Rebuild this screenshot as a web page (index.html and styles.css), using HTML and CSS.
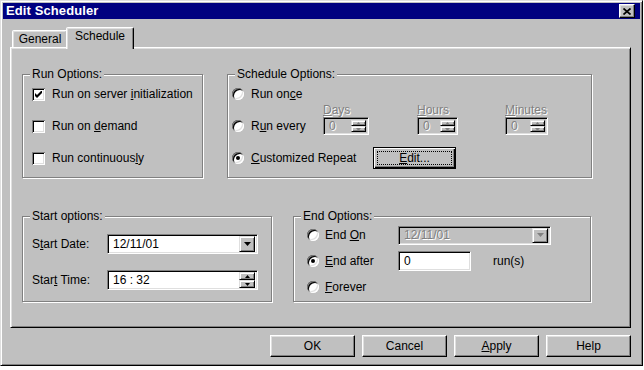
FILE: index.html
```html
<!DOCTYPE html>
<html>
<head>
<meta charset="utf-8">
<title>Edit Scheduler</title>
<link rel="stylesheet" href="styles.css">
</head>
<body>
<div class="window">
  <div class="titlebar">
    <span class="title">Edit Scheduler</span>
    <span class="close"><svg width="8" height="7" viewBox="0 0 8 7"><path d="M0.5 0.5 L7.5 6.5 M7.5 0.5 L0.5 6.5" stroke="#000" stroke-width="1.7" fill="none"/></svg></span>
  </div>
  <div class="main">
    <div class="tabs">
      <div class="tab">General</div>
      <div class="tab active">Schedule</div>
    </div>
    <div class="panel">
      <div class="row row-top">
        <div class="group g-run">
          <div class="legend">Run Options:</div>
          <div class="opts">
            <div class="opt"><span class="check"><svg width="7" height="7" viewBox="0 0 7 7"><polygon points="0,2 2,4 7,-1 7,2 2,7 0,5" fill="#000"/></svg></span><span>Run on server <u>i</u>nitialization</span></div>
            <div class="opt"><span class="check"></span><span>Run on <u>d</u>emand</span></div>
            <div class="opt"><span class="check"></span><span>Run continuous<u>l</u>y</span></div>
          </div>
        </div>
        <div class="group g-sched">
          <div class="legend">Schedule Options:</div>
          <div class="opts">
            <div class="opt"><span class="radio"></span><span>Run on<u>c</u>e</span></div>
            <div class="opt">
              <span class="radio"></span><span class="lbl-every">R<u>u</u>n every</span>
              <div class="spin-col days">
                <span class="spin-label dis"><u>D</u>ays</span>
                <div class="spin"><span class="val dis">0</span><span class="btns"><span class="sbtn"><svg width="5" height="3" viewBox="0 0 5 3"><polygon points="2.5,0 5,3 0,3" fill="#808080"/></svg></span><span class="sbtn"><svg width="5" height="3" viewBox="0 0 5 3"><polygon points="0,0 5,0 2.5,3" fill="#808080"/></svg></span></span></div>
              </div>
              <div class="spin-col hours">
                <span class="spin-label dis"><u>H</u>ours</span>
                <div class="spin"><span class="val dis">0</span><span class="btns"><span class="sbtn"><svg width="5" height="3" viewBox="0 0 5 3"><polygon points="2.5,0 5,3 0,3" fill="#808080"/></svg></span><span class="sbtn"><svg width="5" height="3" viewBox="0 0 5 3"><polygon points="0,0 5,0 2.5,3" fill="#808080"/></svg></span></span></div>
              </div>
              <div class="spin-col minutes">
                <span class="spin-label dis"><u>M</u>inutes</span>
                <div class="spin"><span class="val dis">0</span><span class="btns"><span class="sbtn"><svg width="5" height="3" viewBox="0 0 5 3"><polygon points="2.5,0 5,3 0,3" fill="#808080"/></svg></span><span class="sbtn"><svg width="5" height="3" viewBox="0 0 5 3"><polygon points="0,0 5,0 2.5,3" fill="#808080"/></svg></span></span></div>
              </div>
            </div>
            <div class="opt"><span class="radio on"></span><span class="lbl-custom"><u>C</u>ustomized Repeat</span>
              <span class="btn default"><span class="focus"><u>E</u>dit...</span></span>
            </div>
          </div>
        </div>
      </div>
      <div class="row row-bottom">
        <div class="group g-start">
          <div class="legend">Start options:</div>
          <div class="fields">
            <div class="frow"><span class="flabel">S<u>t</u>art Date:</span>
              <span class="combo"><span class="val">12/11/01</span><span class="dd"><svg width="7" height="4" viewBox="0 0 7 4"><polygon points="0,0 7,0 3.5,4" fill="#000"/></svg></span></span>
            </div>
            <div class="frow"><span class="flabel">Star<u>t</u> Time:</span>
              <span class="combo"><span class="val">16 : 32</span><span class="btns tall"><span class="sbtn"><svg width="5" height="3" viewBox="0 0 5 3"><polygon points="2.5,0 5,3 0,3" fill="#000"/></svg></span><span class="sbtn"><svg width="5" height="3" viewBox="0 0 5 3"><polygon points="0,0 5,0 2.5,3" fill="#000"/></svg></span></span></span>
            </div>
          </div>
        </div>
        <div class="group g-end">
          <div class="legend">End Options:</div>
          <div class="opts">
            <div class="opt"><span class="radio"></span><span class="elabel">End <u>O</u>n</span>
              <span class="combo combo-dis"><span class="val dis">12/11/01</span><span class="dd"><svg width="7" height="4" viewBox="0 0 7 4"><polygon points="0,0 7,0 3.5,4" fill="#808080"/></svg></span></span>
            </div>
            <div class="opt"><span class="radio on"></span><span class="elabel"><u>E</u>nd after</span>
              <span class="textbox">0</span><span class="runs">run(s)</span>
            </div>
            <div class="opt"><span class="radio"></span><span><u>F</u>orever</span></div>
          </div>
        </div>
      </div>
    </div>
    <div class="buttons">
      <span class="btn push">OK</span>
      <span class="btn push">Cancel</span>
      <span class="btn push"><u>A</u>pply</span>
      <span class="btn push">Help</span>
    </div>
  </div>
</div>
</body>
</html>
```
FILE: styles.css
```css
* { box-sizing: border-box; }
body {
  margin: 0;
  background: #fff;
  font-family: "Liberation Sans", Arial, sans-serif;
  font-size: 12px;
  color: #000;
}
u { text-underline-offset: 1px; }

.window {
  width: 643px;
  height: 366px;
  background: #c0c0c0;
  border: 1px solid;
  border-color: #dfdfdf #000 #000 #dfdfdf;
  box-shadow: inset 1px 1px 0 #fff, inset -1px -1px 0 #808080;
  padding: 2px;
  display: flex;
  flex-direction: column;
}

.titlebar {
  height: 16px;
  flex-shrink: 0;
  background: #000080;
  color: #fff;
  display: flex;
  align-items: center;
  justify-content: space-between;
  padding: 0 5px 0 3px;
}
.title { font-weight: bold; font-size: 13px; line-height: 16px; letter-spacing: 0.1px; }

.close {
  width: 16px;
  height: 14px;
  background: #c0c0c0;
  border: 1px solid;
  border-color: #fff #000 #000 #fff;
  box-shadow: inset -1px -1px 0 #808080, inset 1px 1px 0 #dfdfdf;
  display: flex;
  align-items: center;
  justify-content: center;
}

.main { padding: 8px 8px 0 7px; }

.tabs {
  display: flex;
  align-items: flex-end;
  height: 20px;
  padding-left: 2px;
}
.tab {
  width: 56px;
  height: 17px;
  background: #c0c0c0;
  border: 1px solid;
  border-bottom: none;
  border-color: #fff #000 transparent #fff;
  border-radius: 2px 2px 0 0;
  box-shadow: inset -1px 0 0 #808080, inset 1px 1px 0 #dfdfdf;
  text-align: center;
  line-height: 15px;
  padding-top: 1px;
}
.tab.active {
  width: 68px;
  height: 22px;
  margin-left: -2px;
  margin-bottom: -2px;
  position: relative;
  z-index: 1;
  padding-top: 1px;
  line-height: 15px;
}

.panel {
  width: 621px;
  height: 281px;
  border: 1px solid;
  border-color: #fff #000 #000 #fff;
  box-shadow: inset 1px 1px 0 #dfdfdf, inset -1px -1px 0 #808080;
  padding: 26px 0 0 11px;
}

.row { display: flex; }
.row-top { gap: 24px; height: 104px; }
.row-bottom { gap: 21px; height: 86px; margin-top: 38px; }

.group {
  display: flex;
  flex-direction: column;
  border: 1px solid #808080;
  box-shadow: 1px 1px 0 #fff, inset 1px 1px 0 #fff;
}
.g-run { width: 181px; }
.g-sched { width: 365px; }
.g-start { width: 250px; }
.g-end { width: 298px; }

.legend {
  align-self: flex-start;
  margin: -8px 0 -6px 7px;
  padding: 0 2px;
  height: 14px;
  line-height: 14px;
  background: #c0c0c0;
}

.opts { display: flex; flex-direction: column; }
.g-run .opts { padding: 3px 0 0 9px; }
.g-sched .opts { padding: 3px 0 0 4px; }
.g-end .opts { padding: 5px 0 0 13px; }

.opt {
  display: flex;
  align-items: center;
  height: 32px;
  gap: 7px;
  white-space: nowrap;
}
.g-end .opt { height: 26px; gap: 6px; }

.check {
  width: 13px;
  height: 13px;
  flex-shrink: 0;
  background: #fff;
  box-shadow: inset 1px 1px 0 #808080, inset -1px -1px 0 #fff, inset 2px 2px 0 #000, inset -2px -2px 0 #dfdfdf;
  display: flex;
  align-items: center;
  justify-content: center;
}

.radio {
  width: 12px;
  height: 12px;
  flex-shrink: 0;
  border-radius: 50%;
  background: #fff;
  box-shadow: inset 1px 1px 0 #808080, inset -1px -1px 0 #fff, inset 2px 2px 0 #000, inset -2px -2px 0 #dfdfdf;
  display: flex;
  align-items: center;
  justify-content: center;
}
.radio.on::after {
  content: "";
  width: 4px;
  height: 4px;
  border-radius: 50%;
  background: #000;
}

.lbl-every { width: 65px; }
.lbl-custom { width: 115px; }

.dis { color: #808080; text-shadow: 1px 1px 0 #fff; }

.spin-col { display: flex; flex-direction: column; }
.spin-label { margin-top: -14px; height: 14px; line-height: 14px; }
.days { width: 46px; }
.hours { width: 41px; margin-left: 41px; }
.minutes { width: 43px; margin-left: 40px; }

.spin, .combo, .textbox {
  display: flex;
  align-items: center;
  border: 1px solid;
  border-color: #808080 #fff #fff #808080;
  box-shadow: inset 1px 1px 0 #000, inset -1px -1px 0 #dfdfdf;
  padding: 2px;
}
.spin { height: 18px; background: #c0c0c0; }
.val { flex: 1; padding-left: 3px; line-height: 14px; }

.btns { display: flex; flex-direction: column; width: 15px; height: 12px; }
.btns.tall { width: 16px; height: 16px; }
.sbtn, .dd {
  display: flex;
  align-items: center;
  justify-content: center;
  background: #c0c0c0;
  border: 1px solid;
  border-color: #dfdfdf #000 #000 #dfdfdf;
  box-shadow: inset 1px 1px 0 #fff, inset -1px -1px 0 #808080;
}
.sbtn { flex: 1; }
.dd { width: 16px; height: 16px; }

.btn {
  display: flex;
  align-items: center;
  justify-content: center;
  background: #c0c0c0;
  white-space: nowrap;
}
.default {
  width: 83px;
  height: 22px;
  border: 1px solid #000;
  box-shadow: inset 1px 1px 0 #fff, inset -1px -1px 0 #000, inset -2px -2px 0 #808080;
  padding: 3px;
}
.focus {
  flex: 1;
  align-self: stretch;
  border: 1px dotted #000;
  display: flex;
  align-items: center;
  justify-content: center;
}

.fields { display: flex; flex-direction: column; gap: 16px; padding: 17px 0 0 9px; }
.frow { display: flex; align-items: center; height: 20px; }
.flabel { width: 75px; }
.combo { width: 151px; height: 20px; background: #fff; }
.combo-dis { width: 153px; height: 19px; background: #c0c0c0; }
.combo-dis .dd { height: 15px; }

.elabel { width: 67px; }
.textbox { width: 73px; height: 20px; background: #fff; padding-left: 5px; }
.runs { margin-left: 16px; }

.buttons {
  display: flex;
  justify-content: flex-end;
  gap: 7px;
  margin-top: 7px;
  padding-right: 1px;
}
.push {
  width: 85px;
  height: 22px;
  border: 1px solid;
  border-color: #fff #000 #000 #fff;
  box-shadow: inset -1px -1px 0 #808080, inset 1px 1px 0 #dfdfdf;
}
```
